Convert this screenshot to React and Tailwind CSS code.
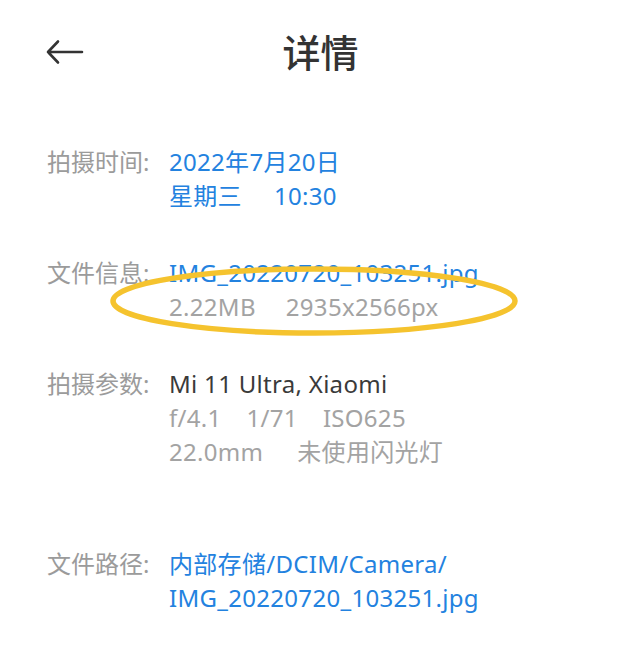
import React from "react";

const font = { fontFamily: '"Noto Sans", "Noto Sans CJK SC", sans-serif' };

function Row({ label, children }) {
  return (
    <div className="grid grid-cols-[122px_1fr] text-[24px] leading-[34px]">
      <div className="text-[#9b9b9b]">{label}</div>
      <div className="tracking-[0.3px]">{children}</div>
    </div>
  );
}

export default function App() {
  return (
    <div className="relative w-[641px] h-[659px] bg-white overflow-hidden" style={font}>
      <div className="grid grid-cols-[1fr_auto_1fr] items-center h-[104px] px-[46px]">
        <svg width="38" height="26" viewBox="0 0 38 26" className="text-[#333]">
          <path d="M2 13 H36 M12 2.5 L2 13 L12 23.5" fill="none" stroke="currentColor" strokeWidth="2.6" strokeLinecap="round" strokeLinejoin="round" />
        </svg>
        <div className="text-[38px] leading-[52px] text-[#333] font-medium">详情</div>
        <div />
      </div>

      <div className="flex flex-col pl-[47px] pt-[41px]">
        <Row label="拍摄时间:">
          <div className="text-[#2382df]">2022年7月20日</div>
          <div className="text-[#2382df]">
            <span>星期三</span>
            <span className="ml-[32px]">10:30</span>
          </div>
        </Row>
        <div className="mt-[43px]">
          <Row label="文件信息:">
            <div className="text-[#2382df]">IMG_20220720_103251.jpg</div>
            <div className="text-[#a3a3a3]">
              <span>2.22MB</span>
              <span className="ml-[30px]">2935x2566px</span>
            </div>
          </Row>
        </div>
        <div className="mt-[43px]">
          <Row label="拍摄参数:">
            <div className="text-[#3a3a3a]">Mi 11 Ultra, Xiaomi</div>
            <div className="text-[#a3a3a3]">
              <span>f/4.1</span>
              <span className="ml-[25px]">1/71</span>
              <span className="ml-[25px]">ISO625</span>
            </div>
            <div className="text-[#a3a3a3]">
              <span>22.0mm</span>
              <span className="ml-[34px]">未使用闪光灯</span>
            </div>
          </Row>
        </div>
        <div className="mt-[78px]">
          <Row label="文件路径:">
            <div className="text-[#2382df]">内部存储/DCIM/Camera/</div>
            <div className="text-[#2382df]">IMG_20220720_103251.jpg</div>
          </Row>
        </div>
      </div>

      <svg className="absolute left-[108px] top-[264px]" width="412" height="74" viewBox="0 0 412 74">
        <ellipse cx="206" cy="37" rx="201" ry="32" fill="none" stroke="#f5c32e" strokeWidth="5.5" />
      </svg>
    </div>
  );
}
